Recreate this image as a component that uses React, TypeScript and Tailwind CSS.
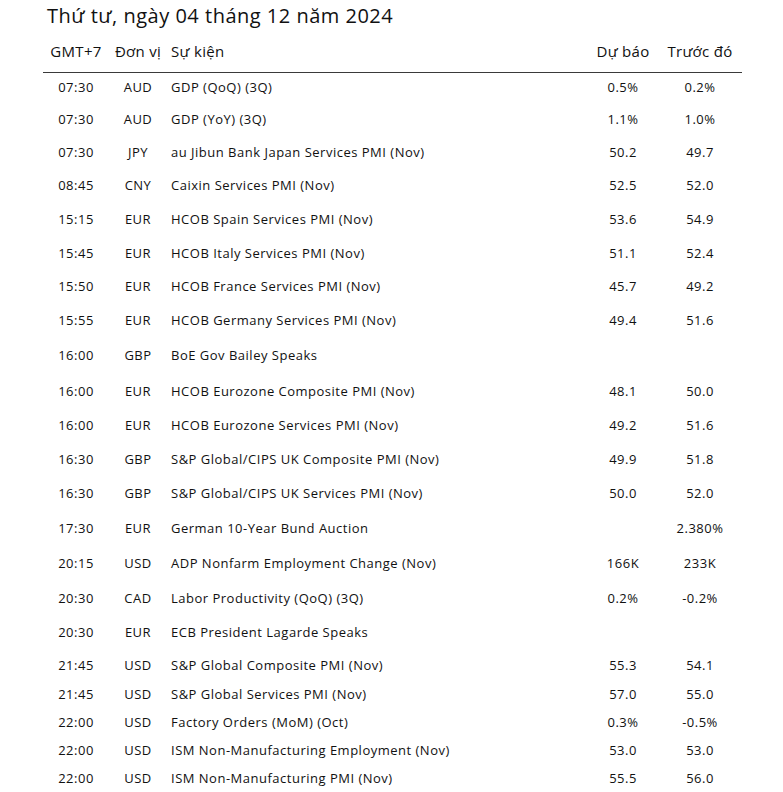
import React from "react";

type Row = {
  time: string;
  unit: string;
  event: string;
  forecast: string;
  previous: string;
  h: string;
};

const rows: Row[] = [
  { time: "07:30", unit: "AUD", event: "GDP (QoQ) (3Q)", forecast: "0.5%", previous: "0.2%", h: "h-[30px]" },
  { time: "07:30", unit: "AUD", event: "GDP (YoY) (3Q)", forecast: "1.1%", previous: "1.0%", h: "h-[33px]" },
  { time: "07:30", unit: "JPY", event: "au Jibun Bank Japan Services PMI (Nov)", forecast: "50.2", previous: "49.7", h: "h-[33px]" },
  { time: "08:45", unit: "CNY", event: "Caixin Services PMI (Nov)", forecast: "52.5", previous: "52.0", h: "h-[34px]" },
  { time: "15:15", unit: "EUR", event: "HCOB Spain Services PMI (Nov)", forecast: "53.6", previous: "54.9", h: "h-[34px]" },
  { time: "15:45", unit: "EUR", event: "HCOB Italy Services PMI (Nov)", forecast: "51.1", previous: "52.4", h: "h-[33px]" },
  { time: "15:50", unit: "EUR", event: "HCOB France Services PMI (Nov)", forecast: "45.7", previous: "49.2", h: "h-[34px]" },
  { time: "15:55", unit: "EUR", event: "HCOB Germany Services PMI (Nov)", forecast: "49.4", previous: "51.6", h: "h-[34px]" },
  { time: "16:00", unit: "GBP", event: "BoE Gov Bailey Speaks", forecast: "", previous: "", h: "h-[36px]" },
  { time: "16:00", unit: "EUR", event: "HCOB Eurozone Composite PMI (Nov)", forecast: "48.1", previous: "50.0", h: "h-[35px]" },
  { time: "16:00", unit: "EUR", event: "HCOB Eurozone Services PMI (Nov)", forecast: "49.2", previous: "51.6", h: "h-[34px]" },
  { time: "16:30", unit: "GBP", event: "S&P Global/CIPS UK Composite PMI (Nov)", forecast: "49.9", previous: "51.8", h: "h-[33px]" },
  { time: "16:30", unit: "GBP", event: "S&P Global/CIPS UK Services PMI (Nov)", forecast: "50.0", previous: "52.0", h: "h-[35px]" },
  { time: "17:30", unit: "EUR", event: "German 10-Year Bund Auction", forecast: "", previous: "2.380%", h: "h-[35px]" },
  { time: "20:15", unit: "USD", event: "ADP Nonfarm Employment Change (Nov)", forecast: "166K", previous: "233K", h: "h-[35px]" },
  { time: "20:30", unit: "CAD", event: "Labor Productivity (QoQ) (3Q)", forecast: "0.2%", previous: "-0.2%", h: "h-[35px]" },
  { time: "20:30", unit: "EUR", event: "ECB President Lagarde Speaks", forecast: "", previous: "", h: "h-[34px]" },
  { time: "21:45", unit: "USD", event: "S&P Global Composite PMI (Nov)", forecast: "55.3", previous: "54.1", h: "h-[31px]" },
  { time: "21:45", unit: "USD", event: "S&P Global Services PMI (Nov)", forecast: "57.0", previous: "55.0", h: "h-[28px]" },
  { time: "22:00", unit: "USD", event: "Factory Orders (MoM) (Oct)", forecast: "0.3%", previous: "-0.5%", h: "h-[28px]" },
  { time: "22:00", unit: "USD", event: "ISM Non-Manufacturing Employment (Nov)", forecast: "53.0", previous: "53.0", h: "h-[28px]" },
  { time: "22:00", unit: "USD", event: "ISM Non-Manufacturing PMI (Nov)", forecast: "55.5", previous: "56.0", h: "h-[28px]" },
];

const App = () => {
  return (
    <div className="w-[783px] h-[792px] overflow-hidden bg-white text-[#111] font-['Open_Sans',sans-serif]">
      <h1 className="pl-[47px] pt-[2px] h-[34px] text-[20px] leading-[28px] tracking-[0.5px]">
        Thứ tư, ngày 04 tháng 12 năm 2024
      </h1>
      <div className="ml-[43px] w-[699px]">
        {/* header */}
        <div className="grid grid-cols-[66px_58px_421px_70px_84px] h-[39px] items-center border-b border-[#3a3a3a] text-[15px] tracking-[0.3px] pb-[4px]">
          <div className="text-center">GMT+7</div>
          <div className="text-center">Đơn vị</div>
          <div className="pl-[4px]">Sự kiện</div>
          <div className="text-center">Dự báo</div>
          <div className="text-center">Trước đó</div>
        </div>
        {rows.map((r, i) => (
          <div
            key={i}
            className={"grid grid-cols-[66px_58px_421px_70px_84px] items-center text-[13px] tracking-[0.5px] " + r.h}
          >
            <div className="text-center">{r.time}</div>
            <div className="text-center">{r.unit}</div>
            <div className="pl-[4px] whitespace-nowrap">{r.event}</div>
            <div className="text-center">{r.forecast}</div>
            <div className="text-center">{r.previous}</div>
          </div>
        ))}
      </div>
    </div>
  );
};

export default App;
